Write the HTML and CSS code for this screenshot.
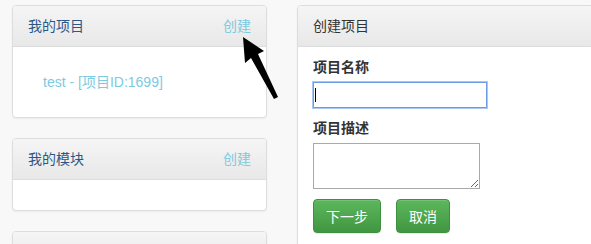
FILE: index.html
```html
<!DOCTYPE html>
<html lang="zh-CN">
<head>
    <meta charset="UTF-8">
    <title>项目管理</title>
    <link rel="stylesheet" href="styles.css">
</head>
<body>
    <div class="page">
        <div class="side">
            <div class="panel">
                <div class="panel-heading">
                    <span class="panel-title">我的项目</span>
                    <a class="create" href="#">创建</a>
                </div>
                <div class="panel-body projects">
                    <a class="project" href="#">test - [项目ID:1699]</a>
                </div>
            </div>
            <div class="panel">
                <div class="panel-heading">
                    <span class="panel-title">我的模块</span>
                    <a class="create" href="#">创建</a>
                </div>
                <div class="panel-body empty"></div>
            </div>
            <div class="panel">
                <div class="panel-heading">
                    <span class="panel-title">&nbsp;</span>
                </div>
            </div>
        </div>

        <div class="main">
            <div class="panel wide">
                <div class="panel-heading">
                    <span class="form-title">创建项目</span>
                </div>
                <div class="panel-body form">
                    <label for="name">项目名称</label>
                    <div class="name-field">
                        <input id="name" type="text">
                        <span class="caret"></span>
                    </div>
                    <label for="desc">项目描述</label>
                    <textarea id="desc"></textarea>
                    <div class="actions">
                        <button class="btn">下一步</button>
                        <button class="btn small">取消</button>
                    </div>
                </div>
            </div>
        </div>
    </div>

    <!-- annotation arrow pointing at the create link -->
    <svg class="arrow" width="50" height="70" viewBox="0 0 50 70">
        <polygon points="3,2 24,16 18,19 38,62 34,64 11,23 5,28" fill="#000"/>
    </svg>
</body>
</html>
```

FILE: styles.css
```css
html, body {
    margin: 0;
    padding: 0;
    overflow: hidden;
}
body {
    background-color: #f8f8f8;
    font-family: "Liberation Sans", Arial, "Noto Sans CJK SC", sans-serif;
    font-size: 14px;
    line-height: 20px;
    color: #333;
    position: relative;
    width: 591px;
    height: 244px;
}
.page {
    display: flex;
    gap: 30px;
    padding: 5px 0 0 12px;
}
.side {
    width: 255px;
    flex-shrink: 0;
    display: flex;
    flex-direction: column;
    gap: 20px;
}
.main {
    flex-shrink: 0;
}
.panel {
    background-color: #fff;
    border: 1px solid #ddd;
    border-radius: 4px;
    box-shadow: 0 1px 2px rgba(0, 0, 0, 0.05);
    overflow: hidden;
}
.panel.wide {
    width: 320px;
}
.panel-heading {
    display: flex;
    justify-content: space-between;
    padding: 10px 15px;
    background-image: linear-gradient(to bottom, #f5f5f5 0%, #e8e8e8 100%);
    border-bottom: 1px solid #ddd;
}
.panel-title {
    color: #2b5788;
}
.form-title {
    color: #333;
}
.create {
    color: #7ccadf;
    text-decoration: none;
}
.panel-body.projects {
    padding: 25px 30px;
}
.project {
    color: #7ccadf;
    text-decoration: none;
}
.panel-body.empty {
    height: 30px;
}
.panel-body.form {
    display: flex;
    flex-direction: column;
    align-items: flex-start;
    padding: 10px 15px 15px;
}
label {
    font-weight: bold;
    color: #333;
}
.name-field {
    position: relative;
    margin: 5px 0 10px;
}
input {
    display: block;
    box-sizing: border-box;
    width: 174px;
    height: 26px;
    margin: 0;
    border: 1px solid #6d9be6;
    box-shadow: 0 0 0 1px #a9c6f5;
    outline: none;
    padding: 0;
}
.caret {
    position: absolute;
    left: 2px;
    top: 6px;
    width: 1px;
    height: 14px;
    background-color: #000;
}
textarea {
    display: block;
    box-sizing: border-box;
    width: 167px;
    height: 46px;
    margin: 5px 0 10px;
    border: 1px solid #a9a9a9;
    padding: 2px;
    resize: both;
    font-family: inherit;
}
.actions {
    display: flex;
    gap: 15px;
}
.btn {
    width: 68px;
    height: 34px;
    padding: 0;
    font-family: inherit;
    font-size: 14px;
    color: #fff;
    border: 1px solid #3e8f3e;
    border-radius: 4px;
    background-image: linear-gradient(to bottom, #5cb85c 0%, #419641 100%);
    box-shadow: inset 0 1px 0 rgba(255, 255, 255, 0.15), 0 1px 1px rgba(0, 0, 0, 0.075);
}
.btn.small {
    width: 54px;
}
.arrow {
    position: absolute;
    left: 240px;
    top: 35px;
}
```
